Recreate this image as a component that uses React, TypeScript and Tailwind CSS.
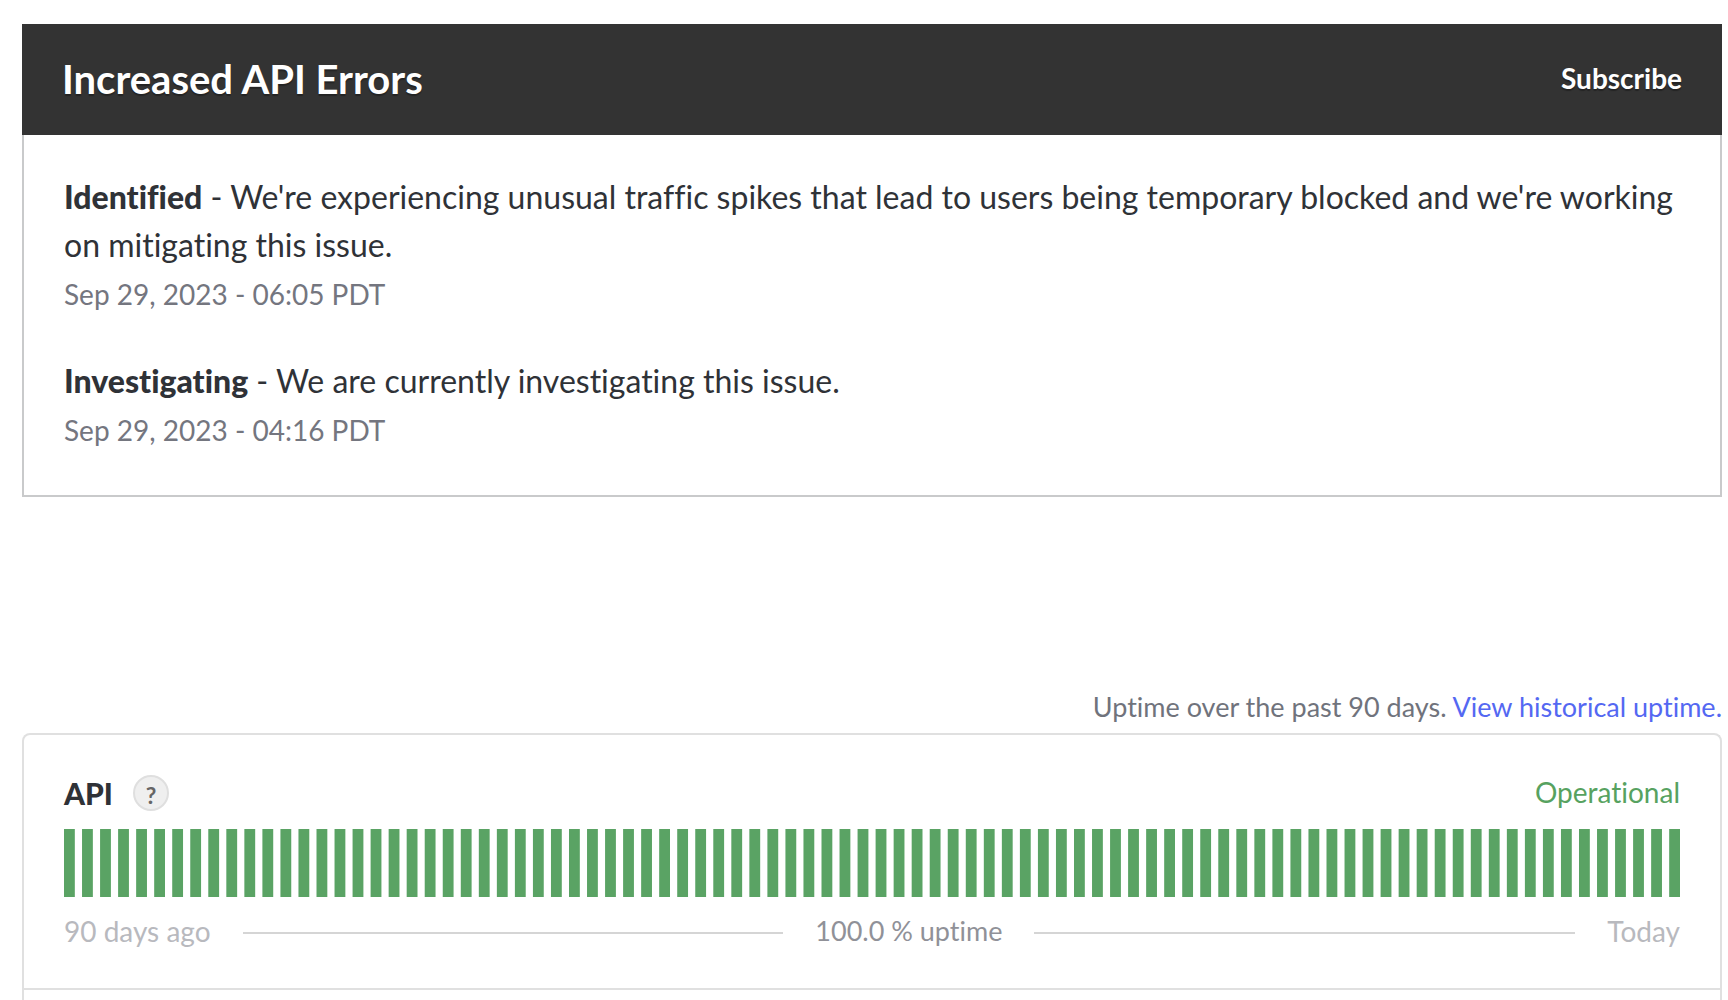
import React from "react";

const updates = [
  {
    status: "Identified",
    message:
      "We're experiencing unusual traffic spikes that lead to users being temporary blocked and we're working on mitigating this issue.",
    time: "Sep 29, 2023 - 06:05 PDT",
  },
  {
    status: "Investigating",
    message: "We are currently investigating this issue.",
    time: "Sep 29, 2023 - 04:16 PDT",
  },
];

const DAYS = Array.from({ length: 90 }, (_, i) => i);

function Incident() {
  return (
    <section>
      <header className="flex h-[111px] items-center justify-between bg-[#333333] px-10 pb-0.5 text-white [text-shadow:0_2px_1px_rgba(0,0,0,0.3)]">
        <h1 className="text-[40px] font-bold leading-12">Increased API Errors</h1>
        <button type="button" className="pb-0.5 text-[28px] font-bold leading-10 [text-shadow:inherit]">
          Subscribe
        </button>
      </header>
      <div className="flex flex-col gap-[39px] border-2 border-t-0 border-[#c9cacb] px-10 pt-[38px] pb-[41px]">
        {updates.map((u) => (
          <article key={u.status}>
            <p className="text-[32px] leading-12 text-[#2f3237]">
              <strong className="font-black">{u.status}</strong> - {u.message}
            </p>
            <time className="mt-px block text-[28px] leading-12 text-[#74767f]">{u.time}</time>
          </article>
        ))}
      </div>
    </section>
  );
}

function Uptime() {
  return (
    <section className="mt-[190px]">
      <p className="pb-1.5 text-right text-[27px] leading-10 text-[#70737c]">
        Uptime over the past 90 days.{" "}
        <a href="#history" className="text-[#5468f2]">
          View historical uptime.
        </a>
      </p>
      <div className="rounded-t-lg border-2 border-b-0 border-[#e0e0e0]">
        <div className="border-b-2 border-[#e0e0e0] px-10 pt-[39px] pb-[33px]">
          <div className="flex items-center">
            <h2 className="text-[30px] font-black leading-9 text-[#2f3237]">API</h2>
            <button
              type="button"
              aria-label="About API"
              className="ml-5 flex size-9 items-center justify-center rounded-full border-2 border-[#dfdfdf] bg-[#efefef] pt-1 text-[23px] font-bold leading-6 text-[#666666]"
            >
              ?
            </button>
            <span className="ml-auto pb-0.5 text-[28px] leading-9 text-[#57a260]">Operational</span>
          </div>
          <svg
            className="mt-[17px] block h-[68px] w-full"
            viewBox="0 0 448 34"
            preserveAspectRatio="none"
            role="img"
            aria-label="Uptime for the past 90 days"
          >
            {DAYS.map((d) => (
              <rect key={d} x={d * 5} y="0" width="3" height="34" fill="#5aa364" />
            ))}
          </svg>
          <div className="mt-[14px] flex items-center text-[28px] leading-10 text-[#b8b9be]">
            <span className="pb-1">90 days ago</span>
            <span className="mx-8 h-0.5 flex-1 bg-[#d5d5d5]" />
            <span className="pb-1 text-[27px] text-[#909198]">100.0 % uptime</span>
            <span className="mx-8 h-0.5 flex-1 bg-[#d5d5d5]" />
            <span className="pb-1">Today</span>
          </div>
        </div>
        <div className="h-10" />
      </div>
    </section>
  );
}

export default function App() {
  return (
    <main className="h-screen overflow-hidden bg-white pt-6 pr-[6px] pl-[22px] font-[Lato,sans-serif] [font-variant-ligatures:no-common-ligatures]">
      <Incident />
      <Uptime />
    </main>
  );
}
